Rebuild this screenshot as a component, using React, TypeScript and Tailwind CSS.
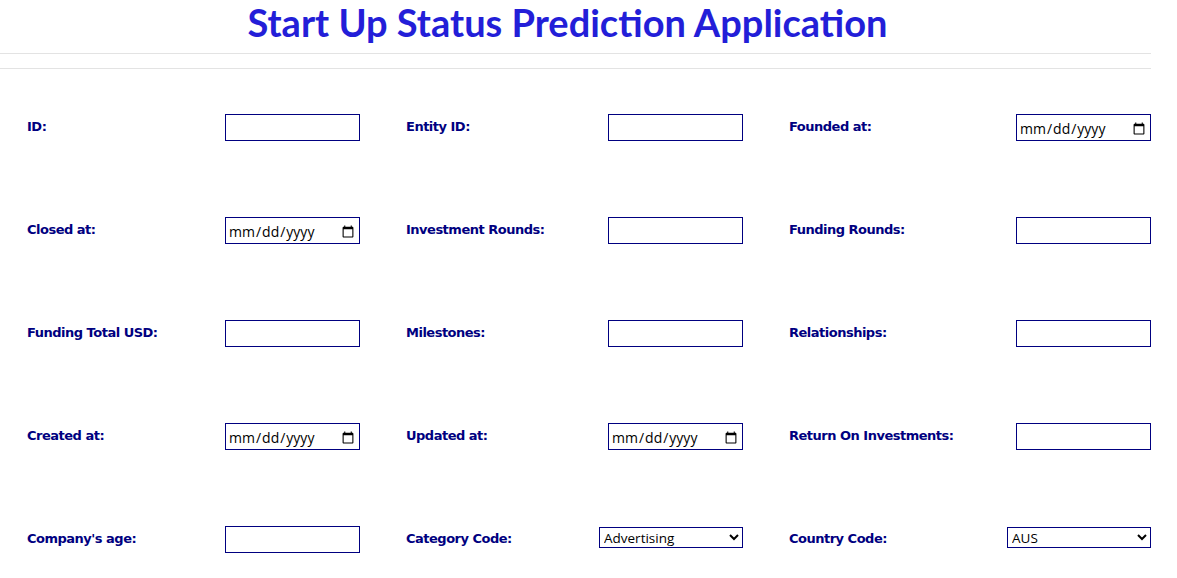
import React from "react";

type Field = {
  label: string;
  kind: "text" | "date" | "select";
  options?: string[];
};

const rows: Field[][] = [
  [
    { label: "ID:", kind: "text" },
    { label: "Entity ID:", kind: "text" },
    { label: "Founded at:", kind: "date" },
  ],
  [
    { label: "Closed at:", kind: "date" },
    { label: "Investment Rounds:", kind: "text" },
    { label: "Funding Rounds:", kind: "text" },
  ],
  [
    { label: "Funding Total USD:", kind: "text" },
    { label: "Milestones:", kind: "text" },
    { label: "Relationships:", kind: "text" },
  ],
  [
    { label: "Created at:", kind: "date" },
    { label: "Updated at:", kind: "date" },
    { label: "Return On Investments:", kind: "text" },
  ],
  [
    { label: "Company's age:", kind: "text" },
    { label: "Category Code:", kind: "select", options: ["Advertising", "Biotech", "Consulting", "Ecommerce", "Software"] },
    { label: "Country Code:", kind: "select", options: ["AUS", "CAN", "DEU", "GBR", "USA"] },
  ],
];

function Control({ field }: { field: Field }) {
  if (field.kind === "select") {
    return (
      <select
        className="ml-[-9px] mt-[-4px] w-[144px] h-[21px] border border-[#000080] bg-white text-[13.5px] text-black"
        style={{ fontFamily: "'Open Sans', sans-serif" }}
        defaultValue={field.options![0]}
      >
        {field.options!.map(o => (
          <option key={o}>{o}</option>
        ))}
      </select>
    );
  }
  return (
    <input
      type={field.kind}
      className="w-[135px] h-[27px] border border-[#000080] bg-white px-[2px] pt-[2px] text-[14px] text-black outline-none"
      style={{ fontFamily: "'Open Sans', sans-serif" }}
    />
  );
}

export default function App() {
  return (
    <div className="w-[1151px] bg-white">
      {/* Header */}
      <div className="h-[54px] border-b border-[#e3e3e3] flex items-start justify-center pr-[16px]">
        <h1
          className="text-[38px] font-bold leading-[44px] text-[#231ed8]"
          style={{ fontFamily: "Lato, 'Open Sans', sans-serif" }}
        >
          Start Up Status Prediction Application
        </h1>
      </div>
      <div className="h-[15px] border-b border-[#e3e3e3]" />

      {/* Form grid */}
      <div className="pl-[27px] pt-[7px] grid grid-cols-[198px_181px_202px_181px_227px_135px] auto-rows-[103px] items-center">
        {rows.map((row, ri) =>
          row.map((f, ci) => (
            <React.Fragment key={`${ri}-${ci}`}>
              <label
                className="text-[13px] font-bold tracking-[-0.5px] text-[#000080] mt-[-2px]"
                style={{ fontFamily: "Tahoma, 'DejaVu Sans', 'Liberation Sans', sans-serif" }}
              >
                {f.label}
              </label>
              <div className="flex items-center">
                <Control field={f} />
              </div>
            </React.Fragment>
          ))
        )}
      </div>
    </div>
  );
}
